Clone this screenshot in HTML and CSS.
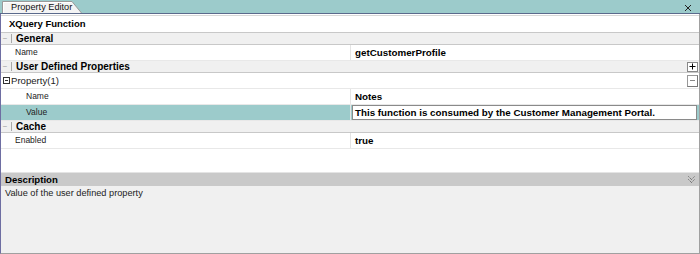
FILE: index.html
```html
<!DOCTYPE html>
<html>
<head>
<meta charset="utf-8">
<link rel="stylesheet" href="styles.css">
</head>
<body>
<div class="window">
  <div class="tabbar">
    <div class="tab">
      <svg class="tab-shape" width="80" height="13" viewBox="0 0 80 13">
        <path d="M0.5 13 V1.5 H70 L79.5 13" fill="#f4f4f4" stroke="#9a9a9a"/>
        <path d="M1.5 13 V2.5 H69.5" fill="none" stroke="#ffffff"/>
      </svg>
      <span class="tab-label">Property Editor</span>
    </div>
    <svg class="close" width="8" height="8" viewBox="0 0 8 8">
      <path d="M1 1 L7 7 M7 1 L1 7" stroke="#222" stroke-width="1"/>
    </svg>
  </div>
  <div class="content">
    <div class="title">XQuery Function</div>

    <div class="cat"><span class="tog">−</span><span class="sep"></span><span class="cat-label">General</span></div>
    <div class="row"><div class="k k1">Name</div><div class="v">getCustomerProfile</div></div>

    <div class="cat"><span class="tog">−</span><span class="sep"></span><span class="cat-label">User Defined Properties</span>
      <span class="btn btn-plus"><svg width="7" height="7" viewBox="0 0 7 7"><path d="M3.5 0.5 V6.5 M0.5 3.5 H6.5" stroke="#000" stroke-width="1"/></svg></span>
    </div>
    <div class="row group"><div class="k k0"><span class="box"><svg width="7" height="7" viewBox="0 0 7 7"><rect x="0.5" y="0.5" width="6" height="6" fill="none" stroke="#333"/><path d="M2 3.5 H5" stroke="#333"/></svg></span>Property(1)</div>
      <span class="btn btn-minus"><svg width="7" height="7" viewBox="0 0 7 7"><path d="M1 3.5 H6" stroke="#888" stroke-width="1"/></svg></span>
    </div>
    <div class="row"><div class="k k2">Name</div><div class="v">Notes</div></div>
    <div class="row sel"><div class="k k2">Value</div><div class="v"><div class="input">This function is consumed by the Customer Management Portal.</div></div></div>

    <div class="cat"><span class="tog">−</span><span class="sep"></span><span class="cat-label">Cache</span></div>
    <div class="row"><div class="k k1">Enabled</div><div class="v">true</div></div>

    <div class="spacer"></div>

    <div class="desc-head"><span>Description</span>
      <svg class="chev" width="7" height="7" viewBox="0 0 7 7"><path d="M0.5 0.5 L3.5 3.5 L6.5 0.5 M0.5 3.5 L3.5 6.5 L6.5 3.5" fill="none" stroke="#444" stroke-width="1" stroke-dasharray="1 1"/></svg>
    </div>
    <div class="desc-body">Value of the user defined property</div>
  </div>
</div>
</body>
</html>
```
FILE: styles.css
```css
html, body {
  margin: 0;
  padding: 0;
  background: #ffffff;
}
body {
  font-family: "Liberation Sans", Arial, sans-serif;
  color: #000;
}
.window {
  width: 700px;
  height: 254px;
  display: flex;
  flex-direction: column;
  box-sizing: border-box;
}
.tabbar {
  height: 13px;
  background: #9ccbcb;
  border-bottom: 1px solid #5b6a8c;
  display: flex;
  align-items: flex-start;
  justify-content: space-between;
  flex: none;
}
.tab {
  position: relative;
  width: 80px;
  height: 13px;
  margin-left: 2px;
}
.tab-shape {
  position: absolute;
  left: 0;
  top: 0;
}
.tab-label {
  position: relative;
  display: block;
  padding: 2px 0 0 9px;
  font-size: 9.2px;
  line-height: 10px;
  color: #111;
}
.close {
  margin: 4px 8px 0 0;
}
.content {
  flex: 1;
  display: flex;
  flex-direction: column;
  border-left: 1px solid #6e6ea2;
  border-right: 1px solid #a0a0a0;
  border-bottom: 1px solid #a0a0a0;
  min-height: 0;
}
.title {
  margin-top: 1px;
  border-top: 1px solid #d8d8d8;
  height: 16px;
  line-height: 16px;
  border-bottom: 1px solid #c8c8c8;
  padding-left: 8px;
  font-weight: bold;
  font-size: 9.5px;
  flex: none;
}
.cat {
  height: 11px;
  background: #f0f0f0;
  border-bottom: 1px solid #c8c8c8;
  display: flex;
  align-items: center;
  flex: none;
}
.tog {
  width: 8px;
  text-align: center;
  font-size: 8px;
  line-height: 11px;
  color: #a0a0a0;
  margin-left: 0;
}
.sep {
  width: 1px;
  height: 9px;
  background: #a8a8a8;
  margin: 0 4px 0 2px;
}
.cat-label {
  font-weight: bold;
  font-size: 10px;
  line-height: 11px;
  flex: 1;
}
.btn {
  width: 11px;
  height: 10px;
  box-sizing: border-box;
  display: flex;
  align-items: center;
  justify-content: center;
  background: #fff;
  margin-right: 1px;
}
.btn-plus {
  border: 1px solid #888;
}
.btn-minus {
  height: 12px;
  border: 1px solid #999;
  border-right-color: #777;
  border-bottom-color: #777;
}
.row {
  height: 15px;
  border-bottom: 1px solid #e8e8e8;
  display: flex;
  align-items: stretch;
  flex: none;
}
.group {
  align-items: center;
}
.k {
  width: 350px;
  box-sizing: border-box;
  font-size: 8.5px;
  line-height: 15px;
  color: #222;
  border-right: 1px solid #e4e4e4;
}
.k0 {
  padding-left: 2px;
  flex: 1;
  border-right: none;
  display: flex;
  align-items: center;
  font-size: 9.6px;
}
.k1 { padding-left: 14px; }
.k2 { padding-left: 25px; }
.box {
  display: flex;
  margin-right: 1px;
}
.v {
  flex: 1;
  font-size: 9.8px;
  font-weight: bold;
  line-height: 15px;
  padding-left: 4px;
}
.sel .k {
  background: #9ccbcb;
}
.sel .v {
  background: #9ccbcb;
  padding: 0 2px 0 1px;
}
.input {
  background: #fff;
  border: 1px solid #8a8a8a;
  height: 15px;
  box-sizing: border-box;
  line-height: 13px;
  padding-left: 2px;
}
.spacer {
  flex: 1;
  background: #fff;
}
.desc-head {
  height: 13px;
  background: #c9c9c9;
  border-top: 1px solid #e4e4e4;
  display: flex;
  align-items: center;
  justify-content: space-between;
  padding: 0 4px 0 4px;
  font-weight: bold;
  font-size: 9.6px;
  flex: none;
}
.desc-body {
  height: 67px;
  background: #f0f0f0;
  font-size: 9.2px;
  line-height: 14px;
  padding-left: 4px;
  color: #222;
  flex: none;
}
```
